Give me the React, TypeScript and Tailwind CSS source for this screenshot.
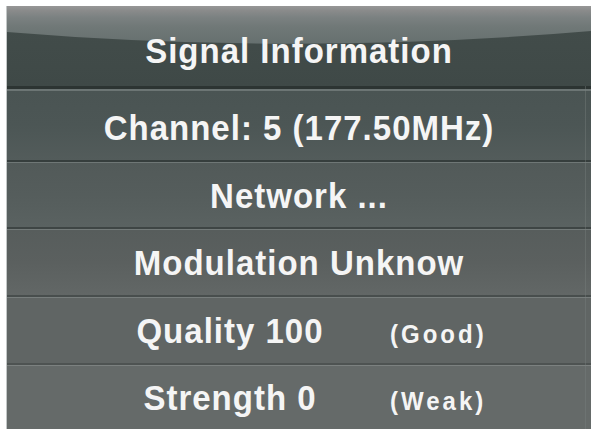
const font = { fontFamily: '"Liberation Sans", Arial, Helvetica, sans-serif' };

const Sep = ({ dark, light, thick = false }: { dark: string; light: string; thick?: boolean }) => (
  <div>
    <div className={thick ? "h-[3px]" : "h-[2px]"} style={{ backgroundColor: dark }} />
    <div className={thick ? "h-[2px]" : "h-[1px]"} style={{ backgroundColor: light }} />
  </div>
);

const HeaderGloss = () => (
  <svg
    className="absolute inset-0 h-full w-full"
    viewBox="0 0 583 80"
    preserveAspectRatio="none"
  >
    <defs>
      <linearGradient id="gloss" x1="0" y1="0" x2="0" y2="1">
        <stop offset="0" stopColor="#979797" />
        <stop offset="0.12" stopColor="#8a8b8b" />
        <stop offset="0.3" stopColor="#7b8181" />
        <stop offset="0.55" stopColor="#707877" />
        <stop offset="1" stopColor="#66706f" />
      </linearGradient>
      <linearGradient id="dark" x1="0" y1="0" x2="0" y2="1">
        <stop offset="0" stopColor="#434d4b" />
        <stop offset="1" stopColor="#3f4947" />
      </linearGradient>
    </defs>
    <rect x="0" y="0" width="583" height="80" fill="url(#dark)" />
    <path d="M0 0 H583 V25 Q291 50 0 26 Z" fill="url(#gloss)" />
  </svg>
);

export default function App() {
  return (
    <div className="min-h-screen bg-white pl-[6px] pr-[2px] pt-[6px]" style={font}>
      <div className="relative flex h-[423px] flex-col border-l border-[#c3c7c7] text-[33px] font-bold leading-none tracking-[1px] text-[#f5f5f5]">
        <div className="relative flex h-[80px] items-center justify-center pt-[8px]">
          <HeaderGloss />
          <span className="relative scale-y-[1.06]">Signal Information</span>
        </div>
        <Sep dark="#2c3432" light="#6c7574" thick />

        <div className="flex h-[69px] items-center justify-center bg-linear-to-b from-[#4a5453] via-[#4c5655] to-[#535c5b] pt-[3px]">
          <span className="scale-y-[1.06]">Channel: 5 (177.50MHz)</span>
        </div>
        <Sep dark="#363e3d" light="#6f7776" />

        <div className="flex h-[64px] items-center justify-center bg-linear-to-b from-[#525a59] via-[#555d5c] to-[#5a6261]">
          <span className="scale-y-[1.06]">Network ...</span>
        </div>
        <Sep dark="#3e4544" light="#737a79" />

        <div className="flex h-[65px] items-center justify-center bg-linear-to-b from-[#575d5c] via-[#5b605f] to-[#626766]">
          <span className="scale-y-[1.06]">Modulation Unknow</span>
        </div>
        <Sep dark="#484e4d" light="#787e7d" />

        <div className="flex h-[65px] items-center bg-[#606564] pl-[100px]">
          <div className="flex scale-y-[1.06] items-baseline">
            <span className="w-[246px] text-center">Quality 100</span>
            <span className="ml-[37px] text-[24px] tracking-[3px]">(Good)</span>
          </div>
        </div>
        <Sep dark="#4e5352" light="#7c8180" />

        <div className="flex h-[63px] items-center bg-[#656a69] pl-[100px]">
          <div className="flex scale-y-[1.06] items-baseline">
            <span className="w-[246px] text-center">Strength 0</span>
            <span className="ml-[37px] text-[24px] tracking-[3px]">(Weak)</span>
          </div>
        </div>

        <div className="pointer-events-none absolute bottom-0 right-[5px] top-[80px] w-[1px] bg-[#7a8180]/40" />
      </div>
    </div>
  );
}
